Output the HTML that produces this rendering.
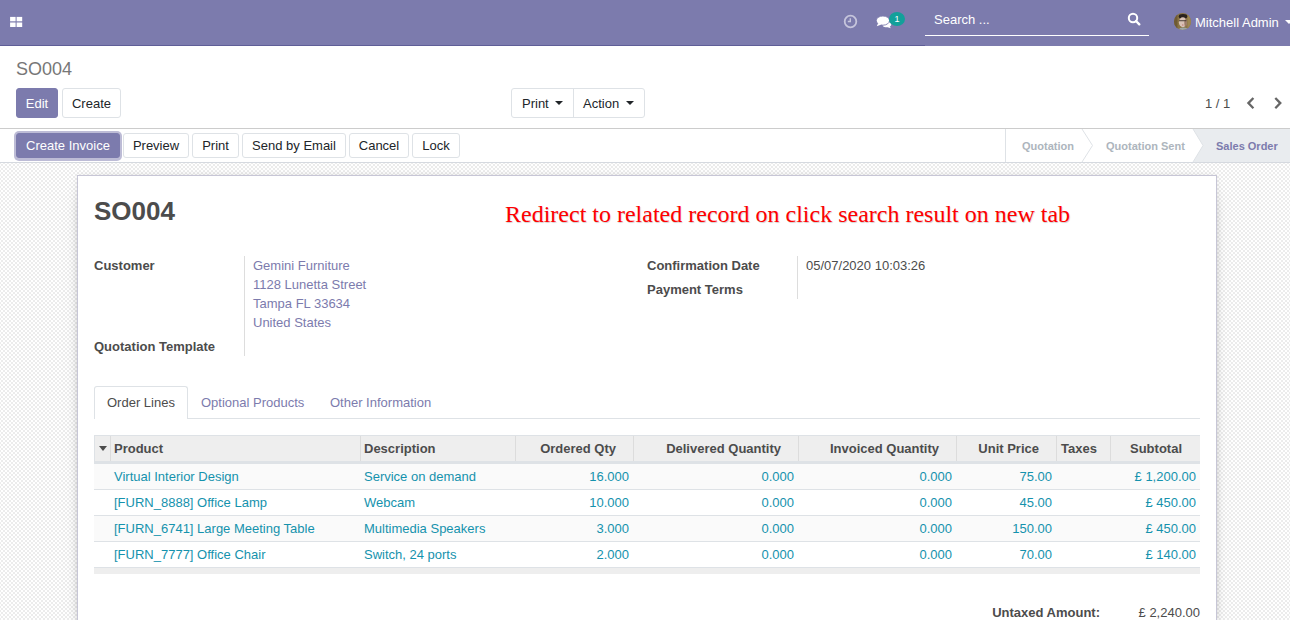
<!DOCTYPE html>
<html><head><meta charset="utf-8">
<style>
*{box-sizing:border-box;margin:0;padding:0}
html,body{width:1290px;height:620px;overflow:hidden;background:#fff}
body{font-family:"Liberation Sans",sans-serif;font-size:13px;color:#4c4c4c;position:relative}
.t{position:absolute;white-space:nowrap;line-height:15px;font-size:13px}
.b{font-weight:bold}
.r{text-align:right}
/* navbar */
#nav{position:absolute;left:0;top:0;width:1290px;height:46px;background:#7c7bad;border-bottom:1px solid #5f5e97}
#navr{position:absolute;left:925px;top:0;width:365px;height:46px;background:#7c7bad}
.grid{position:absolute;left:10px;top:17px;width:12px;height:10px}
.grid i{position:absolute;width:5px;height:4px;background:#fff}
/* control panel */
#cp{position:absolute;left:0;top:46px;width:1290px;height:83px;background:#fff;border-bottom:1px solid #ccc}
.btn{position:absolute;height:30px;line-height:30px;border:1px solid #dee2e6;border-radius:3px;background:#fff;color:#212529;font-size:13px;text-align:center;white-space:nowrap}
.btn.pri{background:#7c7bad;border-color:#7c7bad;color:#fff}
.sbtn{position:absolute;top:133px;height:25px;line-height:23px;border:1px solid #dee2e6;border-radius:3px;background:#fff;color:#212529;font-size:13px;text-align:center;white-space:nowrap}
.caret{position:absolute;width:0;height:0;border-left:4px solid transparent;border-right:4px solid transparent;border-top:4px solid #212529}
/* statusbar */
#sb{position:absolute;left:0;top:129px;width:1290px;height:34px;background:#fff;border-bottom:1px solid #d5d9df}
/* sheet bg */
#bg{position:absolute;left:0;top:163px;width:1290px;height:457px;background:repeating-conic-gradient(#fff 0 25%,#ececec 0 50%) 1px 0/4px 4px;background-attachment:fixed}
#sheet{position:absolute;left:77px;top:175px;width:1140px;height:460px;background:#fff;border:1px solid #c7c6d6;box-shadow:0 5px 20px -15px #000,0 0 5px rgba(0,0,0,.07)}
.vline{position:absolute;width:1px;background:#ddd}
.hline{position:absolute;height:1px;background:#dee2e6}
.lnk{color:#7c7bad}
.info{color:#1592ad}
</style></head>
<body>
<div id="nav">
  <svg style="position:absolute;left:0;top:0" width="30" height="40" viewBox="0 0 30 40"><g fill="#fff"><rect x="10.1" y="16.9" width="5.5" height="4.4"/><rect x="16.6" y="16.9" width="5.6" height="4.4"/><rect x="10.1" y="22.5" width="5.5" height="4.5"/><rect x="16.6" y="22.5" width="5.6" height="4.5"/></g></svg>
  <!-- clock -->
  <svg style="position:absolute;left:842px;top:13px" width="17" height="17" viewBox="0 0 17 17">
    <circle cx="8.5" cy="8.5" r="5.8" fill="none" stroke="#c6c5dc" stroke-width="1.8"/>
    <path d="M8.3 5.3V8.5H5.8" fill="none" stroke="#c6c5dc" stroke-width="1.4"/>
  </svg>
  <!-- chat -->
  <svg style="position:absolute;left:875px;top:14px" width="20" height="16" viewBox="0 0 20 16">
    <path d="M11 7.8 C14.5 7.5 16.3 9.3 16.3 10.6 C16.3 11.7 15.5 12.3 14.8 12.8 L15.9 14.3 L12.6 13.2 C10.8 13.4 8.4 12.9 7.6 11.7 Z" fill="#fff"/>
    <ellipse cx="7.9" cy="6.6" rx="6.6" ry="4.6" fill="#fff" stroke="#7c7bad" stroke-width="0.9"/>
    <path d="M3.2 9 L1.8 12.2 L6.4 10.4 Z" fill="#fff"/>
  </svg>
  <div style="position:absolute;left:889px;top:12px;width:16px;height:14px;border-radius:8px/7px;background:#12a09a"></div>
  <div class="t" style="left:889px;top:13px;width:16px;text-align:center;font-size:9px;line-height:12px;color:#fff">1</div>
</div>
<div id="navr">
  <div class="t" style="left:9px;top:12px;color:#fff">Search ...</div>
  <div style="position:absolute;left:0;top:35px;width:224px;height:1px;background:#fff"></div>
  <svg style="position:absolute;left:202px;top:12px" width="14" height="14" viewBox="0 0 14 14">
    <circle cx="6" cy="6" r="4.2" fill="none" stroke="#fff" stroke-width="2"/>
    <path d="M9 9 L12.3 12.3" stroke="#fff" stroke-width="2.4" stroke-linecap="round"/>
  </svg>
  <svg style="position:absolute;left:249px;top:13px" width="17" height="17" viewBox="0 0 17 17">
    <defs><clipPath id="av"><circle cx="8.5" cy="8.5" r="8.5"/></clipPath></defs>
    <g clip-path="url(#av)">
      <rect width="17" height="17" fill="#8a7444"/>
      <rect x="0" y="0" width="3.5" height="17" fill="#6e5a34"/>
      <rect x="13.5" y="0" width="3.5" height="17" fill="#9c8652"/>
      <ellipse cx="9" cy="3.4" rx="4.3" ry="2.4" fill="#2a221e"/>
      <ellipse cx="8.8" cy="9.3" rx="3.9" ry="5" fill="#d8c2b6"/>
      <ellipse cx="11.6" cy="9.8" rx="1.3" ry="3.6" fill="#9a7a68"/>
      <rect x="5" y="7.3" width="7.5" height="0.9" fill="#3e322c"/>
      <ellipse cx="9.5" cy="16.6" rx="4.5" ry="2.2" fill="#9aa6a8"/>
      <circle cx="8.8" cy="12" r="0.8" fill="#c47f7c"/>
    </g>
  </svg>
  <div class="t" style="left:270px;top:15px;color:#fff">Mitchell Admin</div>
  <div class="caret" style="left:360px;top:20px;border-top-color:#fff"></div>
</div>

<div id="cp"></div>
<div class="t" style="left:16px;top:59px;font-size:18px;line-height:21px;color:#777">SO004</div>
<div class="btn pri" style="left:16px;top:88px;width:42px">Edit</div>
<div class="btn" style="left:62px;top:88px;width:59px">Create</div>
<div class="btn" style="left:511px;top:88px;width:134px;border-radius:3px"></div>
<div class="vline" style="left:573px;top:89px;height:28px;background:#dee2e6"></div>
<div class="t" style="left:522px;top:96px;color:#212529">Print</div>
<div class="caret" style="left:555px;top:101px"></div>
<div class="t" style="left:583px;top:96px;color:#212529">Action</div>
<div class="caret" style="left:626px;top:101px"></div>
<div class="t" style="left:1205px;top:96px;color:#4c4c4c">1 / 1</div>
<svg style="position:absolute;left:1245px;top:96px" width="40" height="14" viewBox="0 0 40 14">
  <path d="M8.4 2 L3.4 7.1 L8.4 12.2" fill="none" stroke="#666" stroke-width="2.3"/>
  <path d="M30.3 2 L35.3 7.1 L30.3 12.2" fill="none" stroke="#666" stroke-width="2.3"/>
</svg>

<div id="sb"></div>
<div style="position:absolute;left:14px;top:131px;width:108px;height:30px;border-radius:5px;background:#bdbcd6"></div>
<div class="sbtn" style="left:16px;width:104px;background:#7c7bad;border-color:#7c7bad;color:#fff">Create Invoice</div>
<div class="sbtn" style="left:123px;width:66px">Preview</div>
<div class="sbtn" style="left:192px;width:47px">Print</div>
<div class="sbtn" style="left:242px;width:104px">Send by Email</div>
<div class="sbtn" style="left:349px;width:60px">Cancel</div>
<div class="sbtn" style="left:412px;width:48px">Lock</div>
<!-- status arrows -->
<svg style="position:absolute;left:1000px;top:129px" width="290" height="33" viewBox="0 0 290 33">
  <path d="M193 0 L290 0 L290 33 L193 33 L203 16.5 Z" fill="#e9ecef"/>
  <path d="M5.5 0 V33" stroke="#dee2e6" stroke-width="1"/>
  <path d="M82 0 L92.5 16.5 L82 33" fill="none" stroke="#dee2e6" stroke-width="1"/>
  <path d="M193 0 L203 16.5 L193 33" fill="none" stroke="#dee2e6" stroke-width="1"/>
</svg>
<div class="t b" style="left:1022px;top:139px;font-size:11px;color:#adb5bd">Quotation</div>
<div class="t b" style="left:1106px;top:139px;font-size:11px;color:#adb5bd">Quotation Sent</div>
<div class="t b" style="left:1216px;top:139px;font-size:11px;color:#7c7bad">Sales Order</div>

<div id="bg"></div>
<div id="sheet"></div>

<div class="t b" style="left:94px;top:197px;font-size:26px;line-height:28px;color:#4c4c4c">SO004</div>
<div class="t" style="left:505px;top:201px;font-family:'Liberation Serif',serif;font-size:24px;line-height:27px;color:#f00;text-shadow:0.6px 0.6px 0.8px rgba(0,0,0,.18)">Redirect to related record on click search result on new tab</div>

<div class="t b" style="left:94px;top:258px">Customer</div>
<div class="vline" style="left:244px;top:256px;height:100px"></div>
<div class="t lnk" style="left:253px;top:258px">Gemini Furniture</div>
<div class="t lnk" style="left:253px;top:277px">1128 Lunetta Street</div>
<div class="t lnk" style="left:253px;top:296px">Tampa FL 33634</div>
<div class="t lnk" style="left:253px;top:315px">United States</div>
<div class="t b" style="left:94px;top:339px">Quotation Template</div>

<div class="t b" style="left:647px;top:258px">Confirmation Date</div>
<div class="vline" style="left:797px;top:256px;height:43px"></div>
<div class="t" style="left:806px;top:258px">05/07/2020 10:03:26</div>
<div class="t b" style="left:647px;top:282px">Payment Terms</div>

<!-- tabs -->
<div class="hline" style="left:94px;top:418px;width:1106px"></div>
<div style="position:absolute;left:94px;top:386px;width:94px;height:33px;background:#fff;border:1px solid #dee2e6;border-bottom:none;border-radius:3px 3px 0 0"></div>
<div class="t" style="left:107px;top:395px">Order Lines</div>
<div class="t lnk" style="left:201px;top:395px">Optional Products</div>
<div class="t lnk" style="left:330px;top:395px">Other Information</div>

<!-- table -->
<div style="position:absolute;left:94px;top:435px;width:1106px;height:29px;background:#eee;border-top:1px solid #dee2e6;border-bottom:2px solid #dee2e6"></div>
<div style="position:absolute;left:94px;top:435px;width:1106px;height:29px;background:#eee;border-top:1px solid #dee2e6;border-left:1px solid #dee2e6;border-bottom:3px solid #dee2e6"></div>
<div class="vline" style="left:110px;top:436px;height:25px;background:#dcdcdc"></div>
<div class="vline" style="left:360px;top:436px;height:25px;background:#dcdcdc"></div>
<div class="vline" style="left:515px;top:436px;height:25px;background:#dcdcdc"></div>
<div class="vline" style="left:633px;top:436px;height:25px;background:#dcdcdc"></div>
<div class="vline" style="left:798px;top:436px;height:25px;background:#dcdcdc"></div>
<div class="vline" style="left:956px;top:436px;height:25px;background:#dcdcdc"></div>
<div class="vline" style="left:1056px;top:436px;height:25px;background:#dcdcdc"></div>
<div class="vline" style="left:1110px;top:436px;height:25px;background:#dcdcdc"></div>
<div class="caret" style="left:99px;top:446px;border-left-width:4px;border-right-width:4px;border-top:5px solid #4c4c4c"></div>
<div class="t b" style="left:114px;top:441px">Product</div>
<div class="t b" style="left:364px;top:441px">Description</div>
<div class="t b r" style="right:674px;top:441px">Ordered Qty</div>
<div class="t b r" style="right:509px;top:441px">Delivered Quantity</div>
<div class="t b r" style="right:351px;top:441px">Invoiced Quantity</div>
<div class="t b r" style="right:251px;top:441px">Unit Price</div>
<div class="t b" style="left:1061px;top:441px">Taxes</div>
<div class="t b r" style="right:108px;top:441px">Subtotal</div>
<div style="position:absolute;left:94px;top:464px;width:1106px;height:26px;background:#fafafa;border-bottom:1px solid #dee2e6"></div>
<div class="t info" style="left:114px;top:469px">Virtual Interior Design</div>
<div class="t info" style="left:364px;top:469px">Service on demand</div>
<div class="t info r" style="right:661px;top:469px">16.000</div>
<div class="t info r" style="right:496px;top:469px">0.000</div>
<div class="t info r" style="right:338px;top:469px">0.000</div>
<div class="t info r" style="right:238px;top:469px">75.00</div>
<div class="t info r" style="right:94px;top:469px">£ 1,200.00</div>
<div style="position:absolute;left:94px;top:490px;width:1106px;height:26px;background:#fff;border-bottom:1px solid #dee2e6"></div>
<div class="t info" style="left:114px;top:495px">[FURN_8888] Office Lamp</div>
<div class="t info" style="left:364px;top:495px">Webcam</div>
<div class="t info r" style="right:661px;top:495px">10.000</div>
<div class="t info r" style="right:496px;top:495px">0.000</div>
<div class="t info r" style="right:338px;top:495px">0.000</div>
<div class="t info r" style="right:238px;top:495px">45.00</div>
<div class="t info r" style="right:94px;top:495px">£ 450.00</div>
<div style="position:absolute;left:94px;top:516px;width:1106px;height:26px;background:#fafafa;border-bottom:1px solid #dee2e6"></div>
<div class="t info" style="left:114px;top:521px">[FURN_6741] Large Meeting Table</div>
<div class="t info" style="left:364px;top:521px">Multimedia Speakers</div>
<div class="t info r" style="right:661px;top:521px">3.000</div>
<div class="t info r" style="right:496px;top:521px">0.000</div>
<div class="t info r" style="right:338px;top:521px">0.000</div>
<div class="t info r" style="right:238px;top:521px">150.00</div>
<div class="t info r" style="right:94px;top:521px">£ 450.00</div>
<div style="position:absolute;left:94px;top:542px;width:1106px;height:26px;background:#fff;border-bottom:1px solid #dee2e6"></div>
<div class="t info" style="left:114px;top:547px">[FURN_7777] Office Chair</div>
<div class="t info" style="left:364px;top:547px">Switch, 24 ports</div>
<div class="t info r" style="right:661px;top:547px">2.000</div>
<div class="t info r" style="right:496px;top:547px">0.000</div>
<div class="t info r" style="right:338px;top:547px">0.000</div>
<div class="t info r" style="right:238px;top:547px">70.00</div>
<div class="t info r" style="right:94px;top:547px">£ 140.00</div>
<div style="position:absolute;left:94px;top:568px;width:1106px;height:6px;background:#eee"></div>
<div class="t b r" style="right:190px;top:605px">Untaxed Amount:</div>
<div class="t r" style="right:90px;top:605px">£ 2,240.00</div>
</body></html>
